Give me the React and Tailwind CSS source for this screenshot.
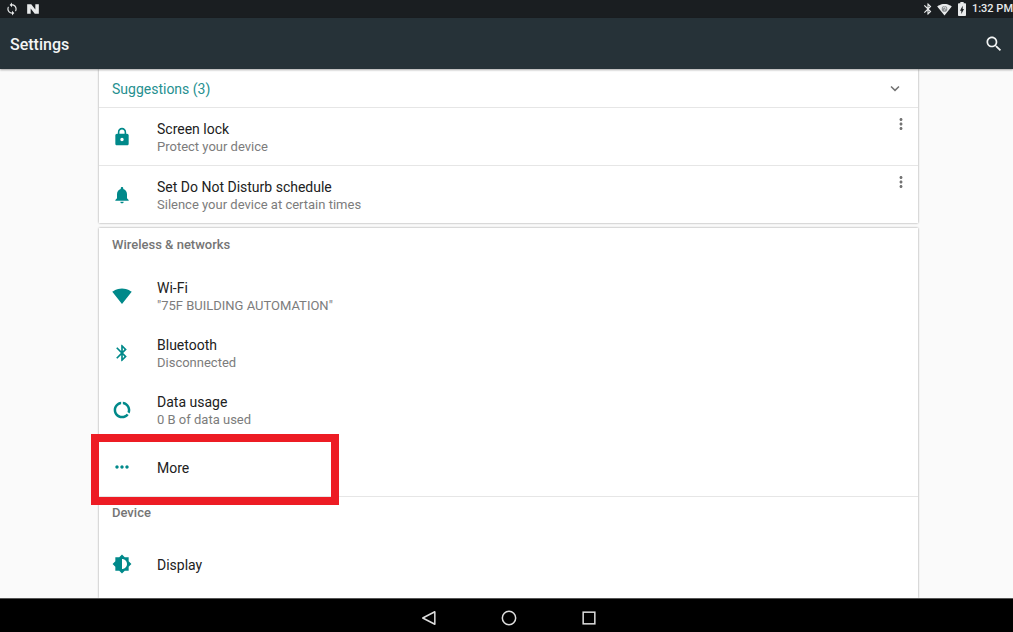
import React from "react";

function Icon({ d, className = "size-5", children }) {
  return (
    <svg viewBox="0 0 24 24" fill="currentColor" aria-hidden="true" className={className}>
      {d && <path d={d} />}
      {children}
    </svg>
  );
}

const paths = {
  lock: "M18 8h-1V6c0-2.76-2.24-5-5-5S7 3.24 7 6v2H6c-1.1 0-2 .9-2 2v10c0 1.1.9 2 2 2h12c1.1 0 2-.9 2-2V10c0-1.1-.9-2-2-2zm-6 9c-1.1 0-2-.9-2-2s.9-2 2-2 2 .9 2 2-.9 2-2 2zm3.1-9H8.9V6c0-1.71 1.39-3.1 3.1-3.1 1.71 0 3.1 1.39 3.1 3.1v2z",
  bell: "M12 22c1.1 0 2-.9 2-2h-4c0 1.1.89 2 2 2zm6-6v-5c0-3.07-1.64-5.64-4.5-6.32V4c0-.83-.67-1.5-1.5-1.5s-1.5.67-1.5 1.5v.68C7.63 5.36 6 7.92 6 11v5l-2 2v1h16v-1l-2-2z",
  wifi: "M12.01 21.49L23.64 7c-.45-.34-4.93-4-11.64-4C5.28 3 .81 6.66.36 7l11.63 14.49.01.01.01-.01z",
  bluetooth:
    "M17.71 7.71L12 2h-1v7.59L6.41 5 5 6.41 10.59 12 5 17.59 6.41 19 11 14.41V22h1l5.71-5.71-4.3-4.29 4.3-4.29zM13 5.83l1.88 1.88L13 9.59V5.83zm1.88 10.46L13 18.17v-3.76l1.88 1.88z",
  data: "M13 2.05v3.03c3.39.49 6 3.39 6 6.92 0 .9-.18 1.75-.48 2.54l2.6 1.53c.56-1.24.88-2.62.88-4.07 0-5.18-3.95-9.45-9-9.95zM12 19c-3.87 0-7-3.13-7-7 0-3.53 2.61-6.43 6-6.92V2.05c-5.06.5-9 4.76-9 9.95 0 5.52 4.47 10 9.99 10 3.31 0 6.24-1.61 8.06-4.09l-2.6-1.53C16.17 17.98 14.21 19 12 19z",
  more: "M6 10c-1.1 0-2 .9-2 2s.9 2 2 2 2-.9 2-2-.9-2-2-2zm12 0c-1.1 0-2 .9-2 2s.9 2 2 2 2-.9 2-2-.9-2-2-2zm-6 0c-1.1 0-2 .9-2 2s.9 2 2 2 2-.9 2-2-.9-2-2-2z",
  display:
    "M20 15.31L23.31 12 20 8.69V4h-4.69L12 .69 8.69 4H4v4.69L.69 12 4 15.31V20h4.69L12 23.31 15.31 20H20v-4.69zM12 18V6c3.31 0 6 2.69 6 6s-2.69 6-6 6z",
  overflow:
    "M12 8c1.1 0 2-.9 2-2s-.9-2-2-2-2 .9-2 2 .9 2 2 2zm0 2c-1.1 0-2 .9-2 2s.9 2 2 2 2-.9 2-2-.9-2-2-2zm0 6c-1.1 0-2 .9-2 2s.9 2 2 2 2-.9 2-2-.9-2-2-2z",
  chevron: "M7.41 7.84L12 12.42l4.59-4.58L18 9.25l-6 6-6-6z",
  search:
    "M15.5 14h-.79l-.28-.27C15.41 12.59 16 11.11 16 9.5 16 5.91 13.09 3 9.5 3S3 5.91 3 9.5 5.91 16 9.5 16c1.61 0 3.09-.59 4.23-1.57l.27.28v.79l5 4.99L20.49 19l-4.99-5zm-6 0C7.01 14 5 11.99 5 9.5S7.01 5 9.5 5 14 7.01 14 9.5 11.99 14 9.5 14z",
  sync: "M12 4V1L8 5l4 4V6c3.31 0 6 2.69 6 6 0 1.01-.25 1.97-.7 2.8l1.46 1.46C19.54 15.03 20 13.57 20 12c0-4.42-3.58-8-8-8zm0 14c-3.31 0-6-2.69-6-6 0-1.01.25-1.97.7-2.8L5.24 7.74C4.46 8.97 4 10.43 4 12c0 4.42 3.58 8 8 8v3l4-4-4-4v3z",
  battery:
    "M16.500 3.500H14.500V1.500h-5v2H7.500C6.700 3.500 6 4.100 6 5v16c0 .900.700 1.500 1.500 1.500h9c.800 0 1.500-.600 1.500-1.500V5c0-.900-.700-1.500-1.500-1.500zM11 19.500v-5H9L13 7v5h2L11 19.500z",
};

function Row({ icon, title, subtitle, children }) {
  return (
    <li className="relative flex h-[57px]">
      <button type="button" className="flex min-w-0 flex-1 items-center gap-[25px] pl-[13px] text-left">
        <Icon d={paths[icon]} className="size-5 shrink-0 text-[#00898a]" />
        <span className="flex flex-col pt-0.5">
          <span className="text-[14px] leading-[18px] text-[#212121]">{title}</span>
          {subtitle && <span className="text-[13px] leading-[18px] text-[#7c7c7c]">{subtitle}</span>}
        </span>
      </button>
      {children}
    </li>
  );
}

function Suggestion(props) {
  return (
    <div className="border-t border-[#e6e6e6]">
      <Row {...props}>
        <button type="button" aria-label="More options" className="self-start px-2 pt-[7px] text-[#737373]">
          <Icon d={paths.overflow} className="size-[18px]" />
        </button>
      </Row>
    </div>
  );
}

function Category({ title, children }) {
  return (
    <section>
      <h2 className="h-[38px] pt-[7px] pl-[13px] text-[13px] leading-[18px] font-medium text-[#757575]">{title}</h2>
      <ul>{children}</ul>
    </section>
  );
}

export default function App() {
  return (
    <div className="flex h-screen flex-col overflow-hidden bg-[#fafafa] font-[Roboto,sans-serif]">
      <div className="flex h-[18px] shrink-0 items-center justify-between bg-[#1a1e21] pl-[5px] text-[#e8eaeb]">
        <div className="flex items-center gap-[7px]">
          <Icon d={paths.sync} className="size-[14px]" />
          <Icon className="size-[14px]">
            <path d="M2 4h7l7 9V4h6v16h-7L8 11v9H2z" />
          </Icon>
        </div>
        <div className="flex items-center gap-0.5">
          <Icon d={paths.bluetooth} className="size-[14px]" />
          <Icon d={paths.wifi} className="size-[15px]">
            <circle cx="12" cy="11" r="4.5" className="fill-[#8b8f91]" />
            <path d="M10 10a2 2 0 1 1 3 1.700c-.7.500-1 .8-1 1.600" fill="none" stroke="#e8eaeb" strokeWidth="1.500" />
          </Icon>
          <Icon d={paths.battery} className="size-4" />
          <time className="text-[11px] leading-[18px] font-medium whitespace-nowrap">1:32 PM</time>
        </div>
      </div>

      <header className="z-10 flex h-[51px] shrink-0 items-center justify-between bg-[#263238] px-[9px] text-[#f3f5f5] shadow-[0_1px_2px_rgba(0,0,0,0.35)]">
        <h1 className="pt-0.5 pl-px text-[16px] leading-6 font-medium">Settings</h1>
        <button type="button" aria-label="Search">
          <Icon d={paths.search} className="size-5" />
        </button>
      </header>

      <main className="flex min-h-0 flex-1 flex-col gap-[5px] overflow-hidden pr-[95px] pl-[99px]">
        <section className="shrink-0 bg-white shadow-[0_0_2px_rgba(0,0,0,0.4)]">
          <button type="button" className="flex h-[38px] w-full items-center justify-between pt-0.5 pr-3.5 pl-[13px] text-[14px] leading-[18px] text-[#26908f]">
            Suggestions (3)
            <Icon d={paths.chevron} className="size-[18px] text-[#737373]" />
          </button>
          <ul>
            <Suggestion icon="lock" title="Screen lock" subtitle="Protect your device" />
            <Suggestion icon="bell" title="Set Do Not Disturb schedule" subtitle="Silence your device at certain times" />
          </ul>
        </section>

        <div className="shrink-0 grow bg-white shadow-[0_0_2px_rgba(0,0,0,0.4)]">
          <div className="py-px">
            <Category title="Wireless &amp; networks">
              <Row icon="wifi" title="Wi-Fi" subtitle={'"75F BUILDING AUTOMATION"'} />
              <Row icon="bluetooth" title="Bluetooth" subtitle="Disconnected" />
              <Row icon="data" title="Data usage" subtitle="0 B of data used" />
              <Row icon="more" title="More">
                <span className="pointer-events-none absolute -top-1 -bottom-2.5 -left-2 w-[248px] border-8 border-[#ed1c24]" />
              </Row>
            </Category>
          </div>
          <div className="border-t border-[#e6e6e6]">
            <Category title="Device">
              <Row icon="display" title="Display" />
            </Category>
          </div>
        </div>
      </main>

      <nav className="z-10 flex h-[34px] shrink-0 items-center justify-center gap-[60px] border-t border-[#555] bg-black pt-1 pl-1 text-[#dedede]">
        <button type="button" aria-label="Back">
          <Icon>
            <path d="M19 4.500v15L4.500 12z" fill="none" stroke="currentColor" strokeWidth="1.800" strokeLinejoin="round" />
          </Icon>
        </button>
        <button type="button" aria-label="Home">
          <Icon>
            <circle cx="12" cy="12" r="8" fill="none" stroke="currentColor" strokeWidth="1.800" />
          </Icon>
        </button>
        <button type="button" aria-label="Recent apps">
          <Icon>
            <rect x="5" y="5" width="14" height="14" fill="none" stroke="currentColor" strokeWidth="1.800" />
          </Icon>
        </button>
      </nav>
    </div>
  );
}
